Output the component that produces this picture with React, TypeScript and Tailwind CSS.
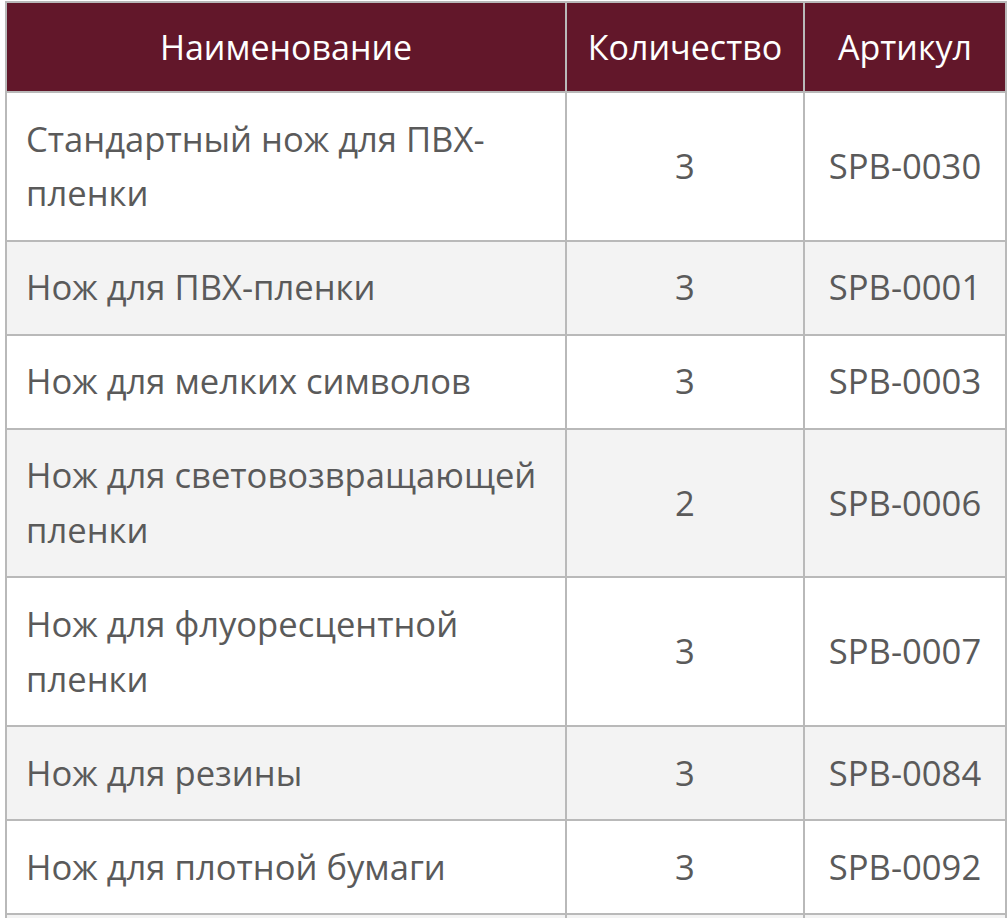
import React from 'react';

const rows: [string, string, string][] = [
  ['Стандартный нож для ПВХ-пленки', '3', 'SPB-0030'],
  ['Нож для ПВХ-пленки', '3', 'SPB-0001'],
  ['Нож для мелких символов', '3', 'SPB-0003'],
  ['Нож для световозвращающей пленки', '2', 'SPB-0006'],
  ['Нож для флуоресцентной пленки', '3', 'SPB-0007'],
  ['Нож для резины', '3', 'SPB-0084'],
  ['Нож для плотной бумаги', '3', 'SPB-0092'],
];

const border = 'border-2 border-[#b9b9b9] align-middle';
const td = `${border} px-[19px] py-[18.65px] leading-[54.7px]`;
const th = `${border} py-[16px] leading-[56px] text-center font-normal`;

export default function App() {
  return (
    <div className="h-screen overflow-hidden bg-white pt-px pl-[5px]" style={{ fontFamily: '"Open Sans", "Noto Sans", sans-serif' }}>
      <table className="w-[1000px] table-fixed border-collapse text-[34.6px] text-[#5a5a5a]">
        <colgroup>
          <col className="w-[560px]" />
          <col className="w-[238px]" />
          <col className="w-[202px]" />
        </colgroup>
        <thead>
          <tr className="bg-[#62172a] text-white text-[34px]">
            <th className={`${th} px-[19px]`}>Наименование</th>
            <th className={`${th} px-0`}>Количество</th>
            <th className={`${th} px-0`}>Артикул</th>
          </tr>
        </thead>
        <tbody>
          {rows.map(([name, qty, sku], i) => (
            <tr key={sku} className={i % 2 === 1 ? 'bg-[#f3f3f3]' : 'bg-white'}>
              <td className={`${td} text-left`}>{name}</td>
              <td className={`${td} text-center`}>{qty}</td>
              <td className={`${td} text-center !px-0`}>{sku}</td>
            </tr>
          ))}
          {/* next row continues below the fold */}
          <tr className="bg-[#f3f3f3]">
            <td className={td}>&nbsp;</td>
            <td className={td}>&nbsp;</td>
            <td className={td}>&nbsp;</td>
          </tr>
        </tbody>
      </table>
    </div>
  );
}
